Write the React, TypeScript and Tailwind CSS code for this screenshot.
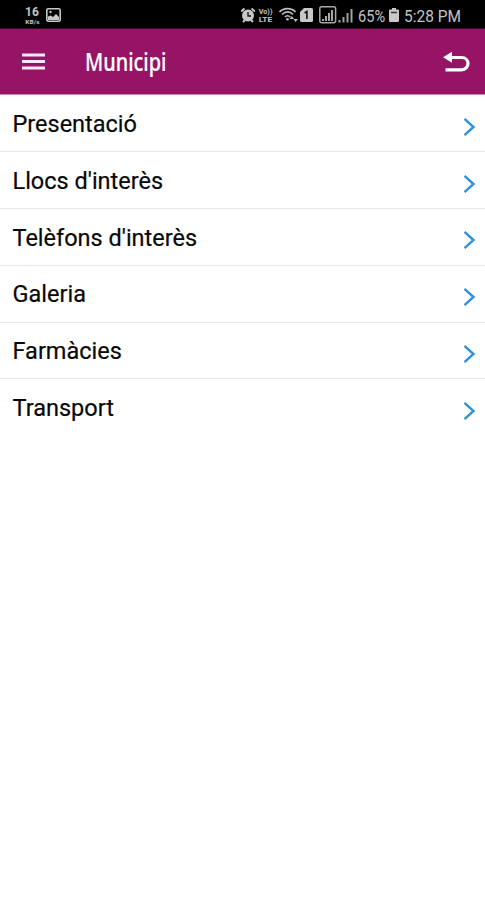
const ITEMS = ["Presentació", "Llocs d'interès", "Telèfons d'interès", "Galeria", "Farmàcies", "Transport"];

function StatusBar() {
  return (
    <div className="flex h-7 shrink-0 items-start bg-black pl-[23px] text-[#c4c4c4]">
      <div className="flex w-[18px] flex-col items-center pt-[5px]">
        <span className="text-[12px] font-bold leading-[14px]">16</span>
        <span className="-mt-px origin-center scale-x-110 text-[6px] font-bold leading-[7px]">KB/s</span>
      </div>
      <svg className="ml-[5px] mt-2 h-[14px] w-[15px]" viewBox="0 0 15 14">
        <rect x="0.8" y="0.8" width="13.4" height="12.4" rx="1.5" fill="none" stroke="#c8c8c8" strokeWidth="1.6" />
        <path d="M2 11V8.500l2.500-1 2.500 1.500 3-3L13 9v3H2z" fill="#c8c8c8" />
        <circle cx="4.500" cy="4" r="1.200" fill="#c8c8c8" />
      </svg>
      <svg className="ml-[180px] mt-2 h-[15px] w-[14px]" viewBox="0 0 14 15">
        <path d="M0 3.500 3.500.5M14 3.500 10.500.5M2 14l2-2M12 14l-2-2" stroke="#c8c8c8" strokeWidth="2" />
        <circle cx="7" cy="7.500" r="6" fill="#c8c8c8" />
        <path d="M7 4v4h3" fill="none" stroke="#111" strokeWidth="1.300" />
      </svg>
      <div className="ml-[3px] flex w-[15px] flex-col items-center pt-2 text-[8px] font-bold leading-[8px]">
        <span className="scale-x-90">Vo))</span>
        <span className="scale-x-105">LTE</span>
      </div>
      <svg className="ml-[5px] mt-[7px] h-4 w-[21px]" viewBox="0 0 20 16" fill="none" stroke="#bdbdbd" strokeWidth="1.700">
        <path d="M1 5C5 .4 13 .4 17 5M3.500 7.500C7 4.100 11.500 4.100 14.500 7.500M6.400 10c1.700-1.700 3.700-1.700 5.300 0" />
        <circle cx="9" cy="12.200" r="1.300" fill="#bdbdbd" stroke="none" />
        <path d="m11 12 2.300-3 2.200 3zm4 0h4.500L17 15z" fill="#bdbdbd" stroke="none" />
      </svg>
      <svg className="ml-px mt-2 h-[14px] w-[13px]" viewBox="0 0 13 14">
        <path d="M4 0h7.500Q13 0 13 1.500v11Q13 14 11.500 14h-10Q0 14 0 12.500V4z" fill="#c8c8c8" />
        <path d="m4.600 5 2.300-1.500V11" fill="none" stroke="#111" strokeWidth="1.600" />
      </svg>
      <svg className="ml-[6px] mt-[6px] h-[18px] w-[34px]" viewBox="0 0 34 18">
        <rect x="0.800" y="0.800" width="15.800" height="15.900" rx="2" fill="none" stroke="#a8a8a8" strokeWidth="1.500" />
        <path d="M4 15v-2M7 15v-5M10 15V7M13 15V4" stroke="#a8a8a8" strokeWidth="2" />
        <path d="M20.500 16.500v-2.500M24.500 16.500V11M28.500 16.500V7M32.500 16.500V3" stroke="#a0a0a0" strokeWidth="2" />
      </svg>
      <span className="ml-[5px] mt-[6px] w-[30px] origin-left scale-x-[0.86] whitespace-nowrap text-[17px] leading-5">65%</span>
      <svg className="ml-px mt-2 h-[14px] w-[10px]" viewBox="0 0 10 14">
        <path d="M3 0h4v1.500h2q1 0 1 1V13q0 1-1 1H1q-1 0-1-1V2.500q0-1 1-1h2z" fill="#c8c8c8" />
        <path d="M2 4.500h6" stroke="#333" strokeWidth="1.500" />
      </svg>
      <span className="ml-[5px] mt-[6px] origin-left scale-x-[0.91] whitespace-nowrap text-[17px] leading-5">5:28 PM</span>
    </div>
  );
}

export default function App() {
  return (
    <div className="flex h-[900px] w-[485px] flex-col overflow-hidden bg-white font-['Roboto',sans-serif]">
      <StatusBar />
      <header className="flex h-[67px] shrink-0 items-center border-b border-t border-b-[#c987b1] border-t-[#3d0a2a] bg-[#971366] pl-[22px] pr-[15px] text-white">
        <svg className="h-[17px] w-[23px]" viewBox="0 0 23 17" role="img" aria-label="Menu">
          <path d="M0 2h23M0 8.500h23M0 15h23" stroke="#fde9f7" strokeWidth="2.800" />
        </svg>
        <h1 className="mb-px ml-[40px] origin-left scale-x-[0.795] font-['Noto_Sans',sans-serif] text-[25px] font-medium leading-8 [-webkit-text-stroke:0.2px_white]">Municipi</h1>
        <button className="ml-auto" aria-label="Back">
          <svg className="h-[22px] w-[27px]" viewBox="0 0 27 22">
            <path d="M6 6.500h12.500c4 0 6.500 2.800 6.500 6S22.500 18.800 18.500 18.800H2.500" fill="none" stroke="#fff" strokeWidth="3.200" />
            <path d="M0 6.300 9 .8v11z" fill="#fff" />
          </svg>
        </button>
      </header>
      <ul className="flex flex-col pt-[0.800px]">
        {ITEMS.map((label) => (
          <li key={label} className="flex h-[56.700px] items-center justify-between border-b-[1.500px] border-[#e7e7e7] pl-[12.500px] pr-[9px] last:border-b-0">
            <span className="mb-[-1px] text-[23.500px] leading-7 text-[#080808] [-webkit-text-stroke:0.2px_#080808]">{label}</span>
            <svg className="mt-[6.500px] h-5 w-[13px]" viewBox="0 0 13 20" fill="none" stroke="#2f91da" strokeWidth="2.400">
              <path d="m1.500 1.800 9 8.200-9 8.200" />
            </svg>
          </li>
        ))}
      </ul>
    </div>
  );
}
